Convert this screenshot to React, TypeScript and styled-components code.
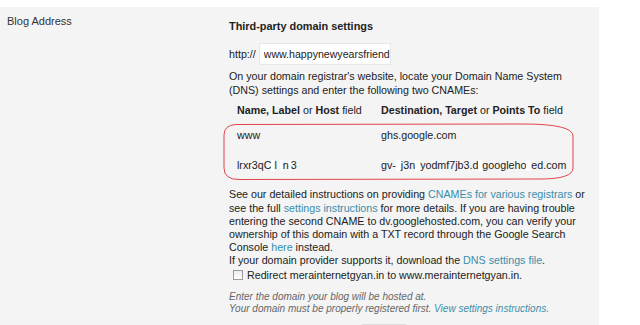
import React from "react";
import styled, { createGlobalStyle } from "styled-components";

const GlobalStyle = createGlobalStyle`
  html, body { margin: 0; padding: 0; background: #ffffff; overflow: hidden; }
  body { font-family: "Liberation Sans", Arial, sans-serif; font-size: 10.7px; color: #222; }
`;

const Page = styled.div`
  padding-top: 7px;
`;

const Panel = styled.section`
  width: 599px;
  height: 318px;
  overflow: hidden;
  background: #f4f4f4;
  display: grid;
  grid-template-columns: 229px 1fr;
`;

const SideLabel = styled.div`
  padding: 7.5px 0 0 7px;
  font-size: 11px;
  line-height: 13px;
  color: #333;
`;

const Content = styled.div`
  padding-top: 13px;
  width: 362px;
  font-size: 10.7px;
  color: #222;
`;

const Heading = styled.h3`
  margin: 0;
  font-size: 10.9px;
  line-height: 13px;
  font-weight: bold;
  color: #222;
`;

const UrlRow = styled.div`
  display: flex;
  align-items: center;
  gap: 3px;
  margin-top: 10px;
  line-height: 13px;
`;

const UrlInput = styled.input`
  box-sizing: border-box;
  width: 132px;
  height: 22px;
  margin: 0;
  padding: 0 0 0 4px;
  border: 1px solid #e8e8e8;
  background: #fff;
  font-family: "Liberation Sans", Arial, sans-serif;
  font-size: 10.6px;
  color: #222;
  outline: none;
`;

const Para = styled.p<{ $top: number; $lh: number }>`
  margin: ${(p) => p.$top}px 0 0;
  line-height: ${(p) => p.$lh}px;
`;

const TableWrap = styled.div`
  position: relative;
  margin-top: 3px;
`;

const Table = styled.table`
  border-collapse: collapse;
  font-size: 10.7px;
`;

const HeadCell = styled.th<{ $w?: number }>`
  padding: 4px 8px;
  text-align: left;
  font-weight: normal;
  line-height: 13px;
  white-space: nowrap;
  width: ${(p) => (p.$w ? `${p.$w - 16}px` : "auto")};
`;

const Cell = styled.td`
  padding: 7.6px 8px 9.4px;
  line-height: 13px;
  white-space: nowrap;
`;

const Redact = styled.span<{ $w: number }>`
  display: inline-block;
  width: ${(p) => p.$w}px;
  height: 11px;
  background: #ffffff;
  vertical-align: -2px;
`;

const Annotation = styled.svg`
  position: absolute;
  left: -6px;
  top: 23px;
  width: 352px;
  height: 58px;
  overflow: visible;
  pointer-events: none;
`;

const Link = styled.a`
  color: #3a8eab;
  text-decoration: none;
`;

const CheckRow = styled.label`
  display: flex;
  align-items: center;
  gap: 4px;
  padding-left: 4px;
  line-height: 15px;
`;

const Check = styled.span`
  box-sizing: border-box;
  width: 10px;
  height: 10px;
  border: 1px solid #9a9a9a;
  background: linear-gradient(#ececec, #ffffff);
`;

const Hint = styled.div`
  margin-top: 8.4px;
  font-size: 10px;
  line-height: 12px;
  font-style: italic;
  color: #666;
`;

const ButtonRow = styled.div`
  margin-top: 9px;
  padding-left: 132px;
`;

const Button = styled.button`
  width: 46px;
  height: 26px;
  border: 1px solid #dcdcdc;
  border-radius: 2px;
  background: linear-gradient(#f6f6f6, #eeeeee);
`;

export default function App() {
  return (
    <>
      <GlobalStyle />
      <Page>
        <Panel>
          <SideLabel>Blog Address</SideLabel>
          <Content>
            <Heading>Third-party domain settings</Heading>
            <UrlRow>
              <span>http://</span>
              <UrlInput defaultValue="www.happynewyearsfriend" />
            </UrlRow>
            <Para $top={5} $lh={13.5}>
              On your domain registrar's website, locate your Domain Name System
              (DNS) settings and enter the following two CNAMEs:
            </Para>
            <TableWrap>
              <Table>
                <thead>
                  <tr>
                    <HeadCell $w={144}>
                      <b>Name, Label</b> or <b>Host</b> field
                    </HeadCell>
                    <HeadCell>
                      <b>Destination, Target</b> or <b>Points To</b> field
                    </HeadCell>
                  </tr>
                </thead>
                <tbody>
                  <tr>
                    <Cell>www</Cell>
                    <Cell>ghs.google.com</Cell>
                  </tr>
                  <tr>
                    <Cell>
                      lrxr3qC<Redact $w={3} />l <Redact $w={3} />n<Redact $w={2} />3
                    </Cell>
                    <Cell>
                      gv-<Redact $w={5} />j3n<Redact $w={5} />yodmf7jb3.d
                      <Redact $w={4} />googleho<Redact $w={5} />ed.com
                    </Cell>
                  </tr>
                </tbody>
              </Table>
              <Annotation viewBox="0 0 352 58">
                <path
                  d="M 13 1.5 L 300 1 Q 350 1 350 13 L 350 45 Q 350 56 317 56 L 16 56.5 Q 1 56.5 1 45 L 1 12 Q 1 2 13 1.5 Z"
                  fill="none"
                  stroke="#e2444e"
                  strokeWidth="1"
                />
              </Annotation>
            </TableWrap>
            <Para $top={7.5} $lh={13.2}>
              See our detailed instructions on providing{" "}
              <Link href="#">CNAMEs for various registrars</Link> or see the full{" "}
              <Link href="#">settings instructions</Link> for more details. If you
              are having trouble entering the second CNAME to dv.googlehosted.com,
              you can verify your ownership of this domain with a TXT record through
              the Google Search Console <Link href="#">here</Link> instead.
              <br />
              If your domain provider supports it, download the{" "}
              <Link href="#">DNS settings file</Link>.
            </Para>
            <CheckRow>
              <Check />
              <span>Redirect merainternetgyan.in to www.merainternetgyan.in.</span>
            </CheckRow>
            <Hint>
              Enter the domain your blog will be hosted at.
              <br />
              Your domain must be properly registered first.{" "}
              <Link href="#">View settings instructions.</Link>
            </Hint>
            <ButtonRow>
              <Button />
            </ButtonRow>
          </Content>
        </Panel>
      </Page>
    </>
  );
}
